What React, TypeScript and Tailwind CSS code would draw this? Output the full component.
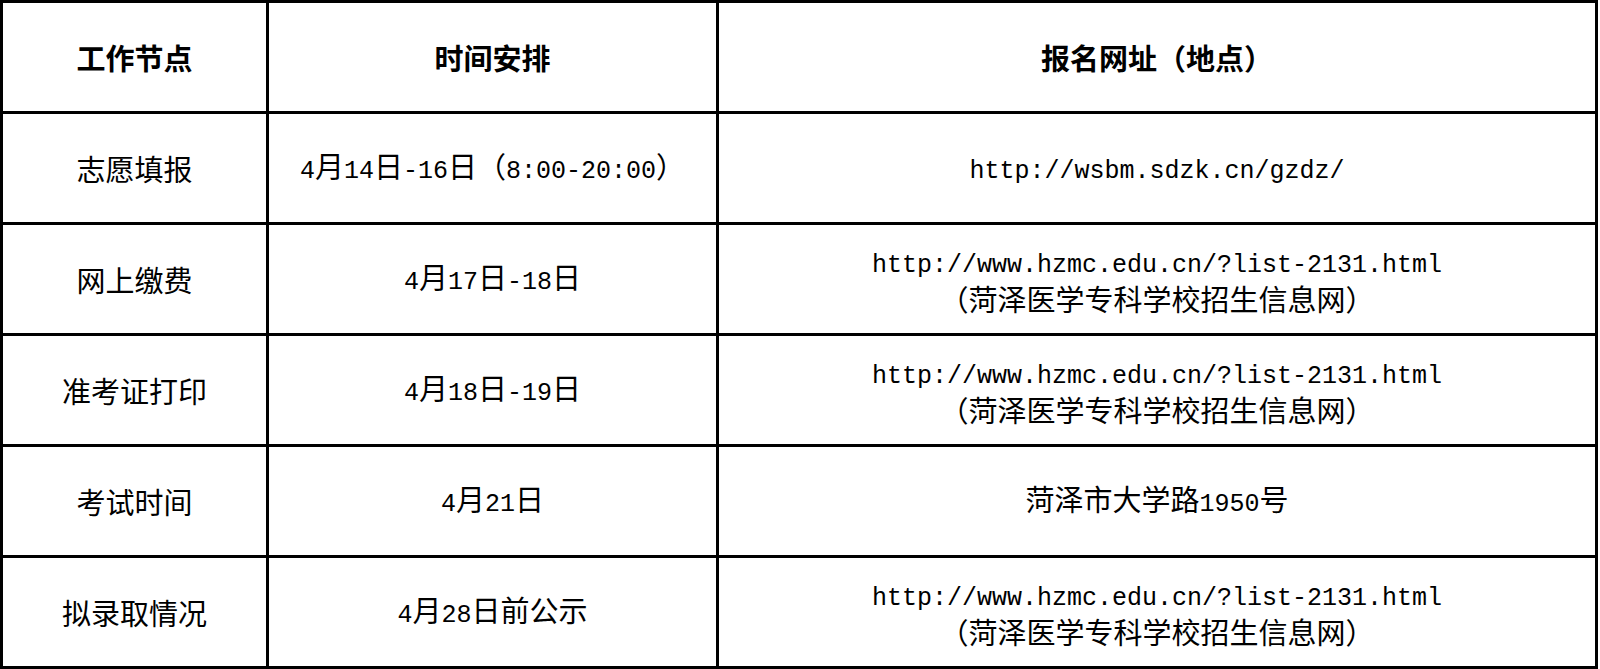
import { Fragment } from 'react';

type Row = { node: string; time: string; place: string[] };

const ROWS: Row[] = [
  { node: '志愿填报', time: '4月14日-16日（8:00-20:00）', place: ['http://wsbm.sdzk.cn/gzdz/'] },
  { node: '网上缴费', time: '4月17日-18日', place: ['http://www.hzmc.edu.cn/?list-2131.html', '（菏泽医学专科学校招生信息网）'] },
  { node: '准考证打印', time: '4月18日-19日', place: ['http://www.hzmc.edu.cn/?list-2131.html', '（菏泽医学专科学校招生信息网）'] },
  { node: '考试时间', time: '4月21日', place: ['菏泽市大学路1950号'] },
  { node: '拟录取情况', time: '4月28日前公示', place: ['http://www.hzmc.edu.cn/?list-2131.html', '（菏泽医学专科学校招生信息网）'] },
];

// SimSun-like mix: half-width latin in a mono face, CJK in Noto
function Mixed({ text }: { text: string }) {
  const parts = text.match(/[\x00-\x7F]+|[^\x00-\x7F]+/g) ?? [];
  return (
    <>
      {parts.map((p, i) =>
        /^[\x00-\x7F]+$/.test(p) ? (
          <span key={i} className="font-['Liberation_Mono',monospace] text-[25px]">{p}</span>
        ) : (
          <span key={i}>{p}</span>
        )
      )}
    </>
  );
}

function Cell({ children, bold }: { children: React.ReactNode; bold?: boolean }) {
  return (
    <div
      className={
        bold
          ? 'bg-white flex flex-col items-center justify-center text-center font-bold'
          : 'bg-white flex flex-col items-center justify-center text-center'
      }
    >
      {children}
    </div>
  );
}

export default function App() {
  return (
    <div className="w-[1600px] h-[669px] bg-white font-['Noto_Sans_CJK_SC',sans-serif] text-[29px] leading-[33px] text-black">
      <div className="w-[1598px] grid grid-cols-[263px_447px_876px] grid-rows-[repeat(6,108px)] gap-[3px] p-[3px] bg-black">
        <Cell bold>工作节点</Cell>
        <Cell bold>时间安排</Cell>
        <Cell bold>报名网址（地点）</Cell>
        {ROWS.map((r) => (
          <Fragment key={r.node}>
            <Cell>{r.node}</Cell>
            <Cell>
              <div><Mixed text={r.time} /></div>
            </Cell>
            <Cell>
              {r.place.map((line) => (
                <div key={line}><Mixed text={line} /></div>
              ))}
            </Cell>
          </Fragment>
        ))}
      </div>
    </div>
  );
}
